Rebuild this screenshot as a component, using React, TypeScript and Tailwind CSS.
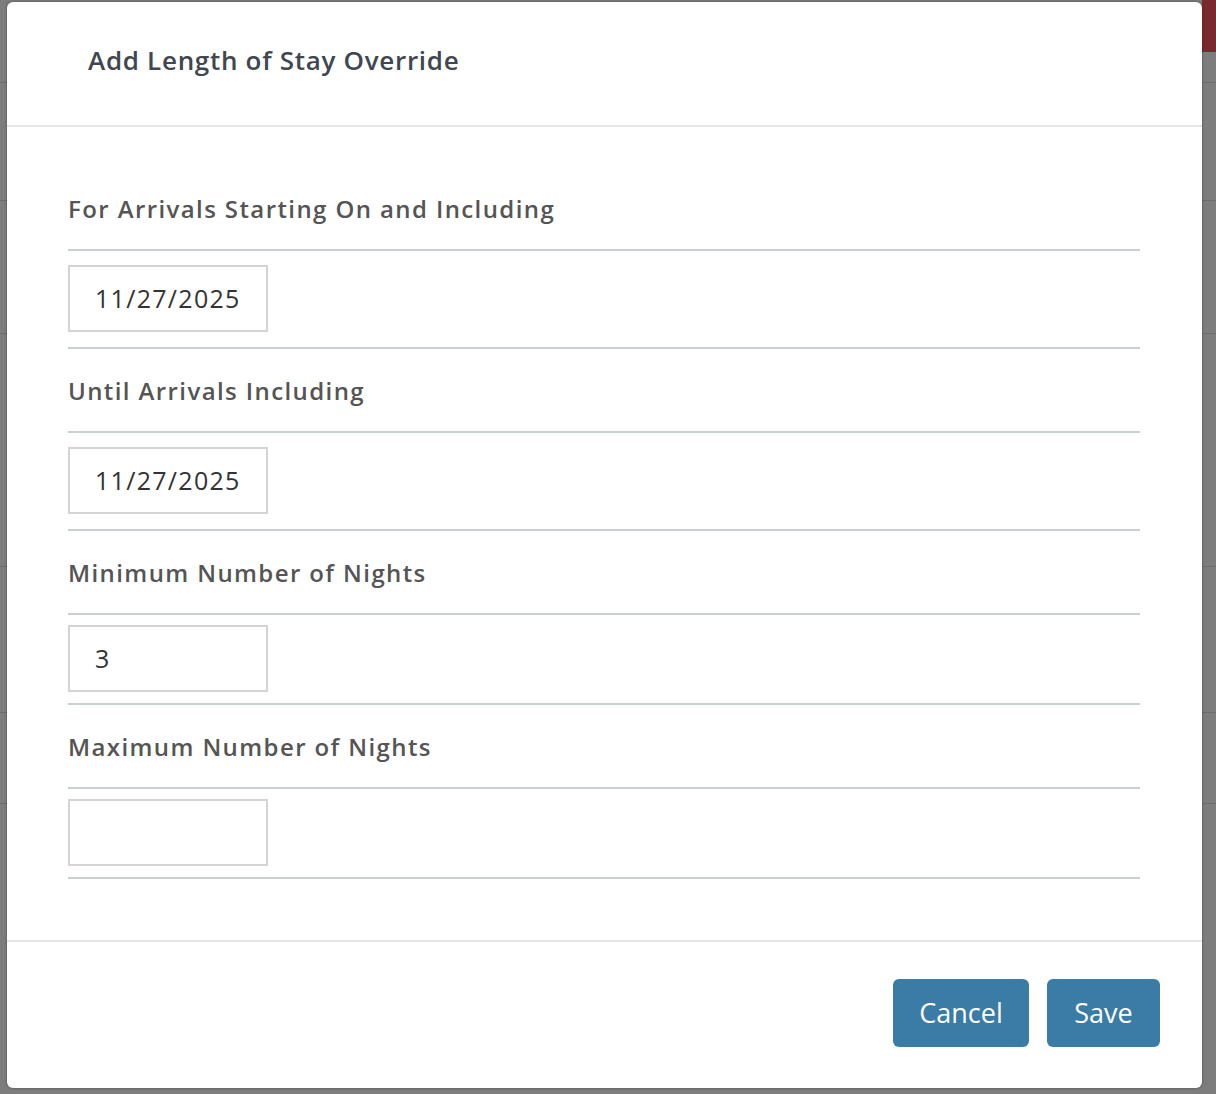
import React from "react";

const sections = [
  { label: "For Arrivals Starting On and Including", value: "11/27/2025", date: true },
  { label: "Until Arrivals Including", value: "11/27/2025", date: true },
  { label: "Minimum Number of Nights", value: "3", date: false },
  { label: "Maximum Number of Nights", value: "", date: false },
];

export default function App() {
  return (
    <div
      className="relative h-[1094px] w-[1216px] overflow-hidden bg-[#7d7d7d] pl-[7px] pt-[2px]"
      style={{ fontFamily: "'Open Sans', 'Noto Sans', sans-serif" }}
    >
      {/* page behind the backdrop */}
      <div className="absolute right-0 top-0 h-[52px] w-[14px] bg-[#7a2a2c]" />
      <div className="absolute left-0 top-[82px] h-px w-full bg-[#6c6c6c]" />
      <div className="absolute left-0 top-[200px] h-px w-full bg-[#6c6c6c]" />
      <div className="absolute left-0 top-[333px] h-px w-full bg-[#6c6c6c]" />
      <div className="absolute left-0 top-[566px] h-px w-full bg-[#6c6c6c]" />
      <div className="absolute left-0 top-[712px] h-px w-full bg-[#6c6c6c]" />
      <div className="absolute left-0 top-[803px] h-px w-full bg-[#6c6c6c]" />

      <div className="relative flex h-[1086px] w-[1195px] flex-col rounded-[6px] bg-white shadow-[0_0_3px_rgba(0,0,0,0.4)]">
        <div className="flex h-[125px] items-center border-b-2 border-[#e5e5e5] pl-[81px] pb-[6px]">
          <h2 className="text-[26px] font-semibold tracking-[0.7px] text-[#3f4750]">Add Length of Stay Override</h2>
        </div>

        <div className="pl-[61px] pr-[62px] pt-[40px] pb-[61px]">
          {sections.map((s) => (
            <div key={s.label}>
              <div className="flex h-[84px] items-center border-b-2 border-[#c8d1d1] pt-[2px] text-[24px] font-semibold tracking-[1.4px] text-[#555555]">
                {s.label}
              </div>
              <div
                className={
                  s.date
                    ? "border-b-2 border-[#c8d1d1] pt-[14px] pb-[15px]"
                    : "border-b-2 border-[#c8d1d1] pt-[10px] pb-[11px]"
                }
              >
                <div className="flex h-[67px] w-[200px] items-center border-2 border-[#d4d4d4] px-[25px] text-[25px] tracking-[1.3px] text-[#333333]">
                  {s.value}
                </div>
              </div>
            </div>
          ))}
        </div>

        <div className="flex flex-1 items-start justify-end gap-[18px] border-t-2 border-[#e5e5e5] pt-[37px] pr-[42px]">
          <button className="h-[68px] w-[136px] rounded-[6px] bg-[#3a7ca5] text-[27px] text-white">Cancel</button>
          <button className="h-[68px] w-[113px] rounded-[6px] bg-[#3a7ca5] text-[27px] text-white">Save</button>
        </div>
      </div>
    </div>
  );
}
